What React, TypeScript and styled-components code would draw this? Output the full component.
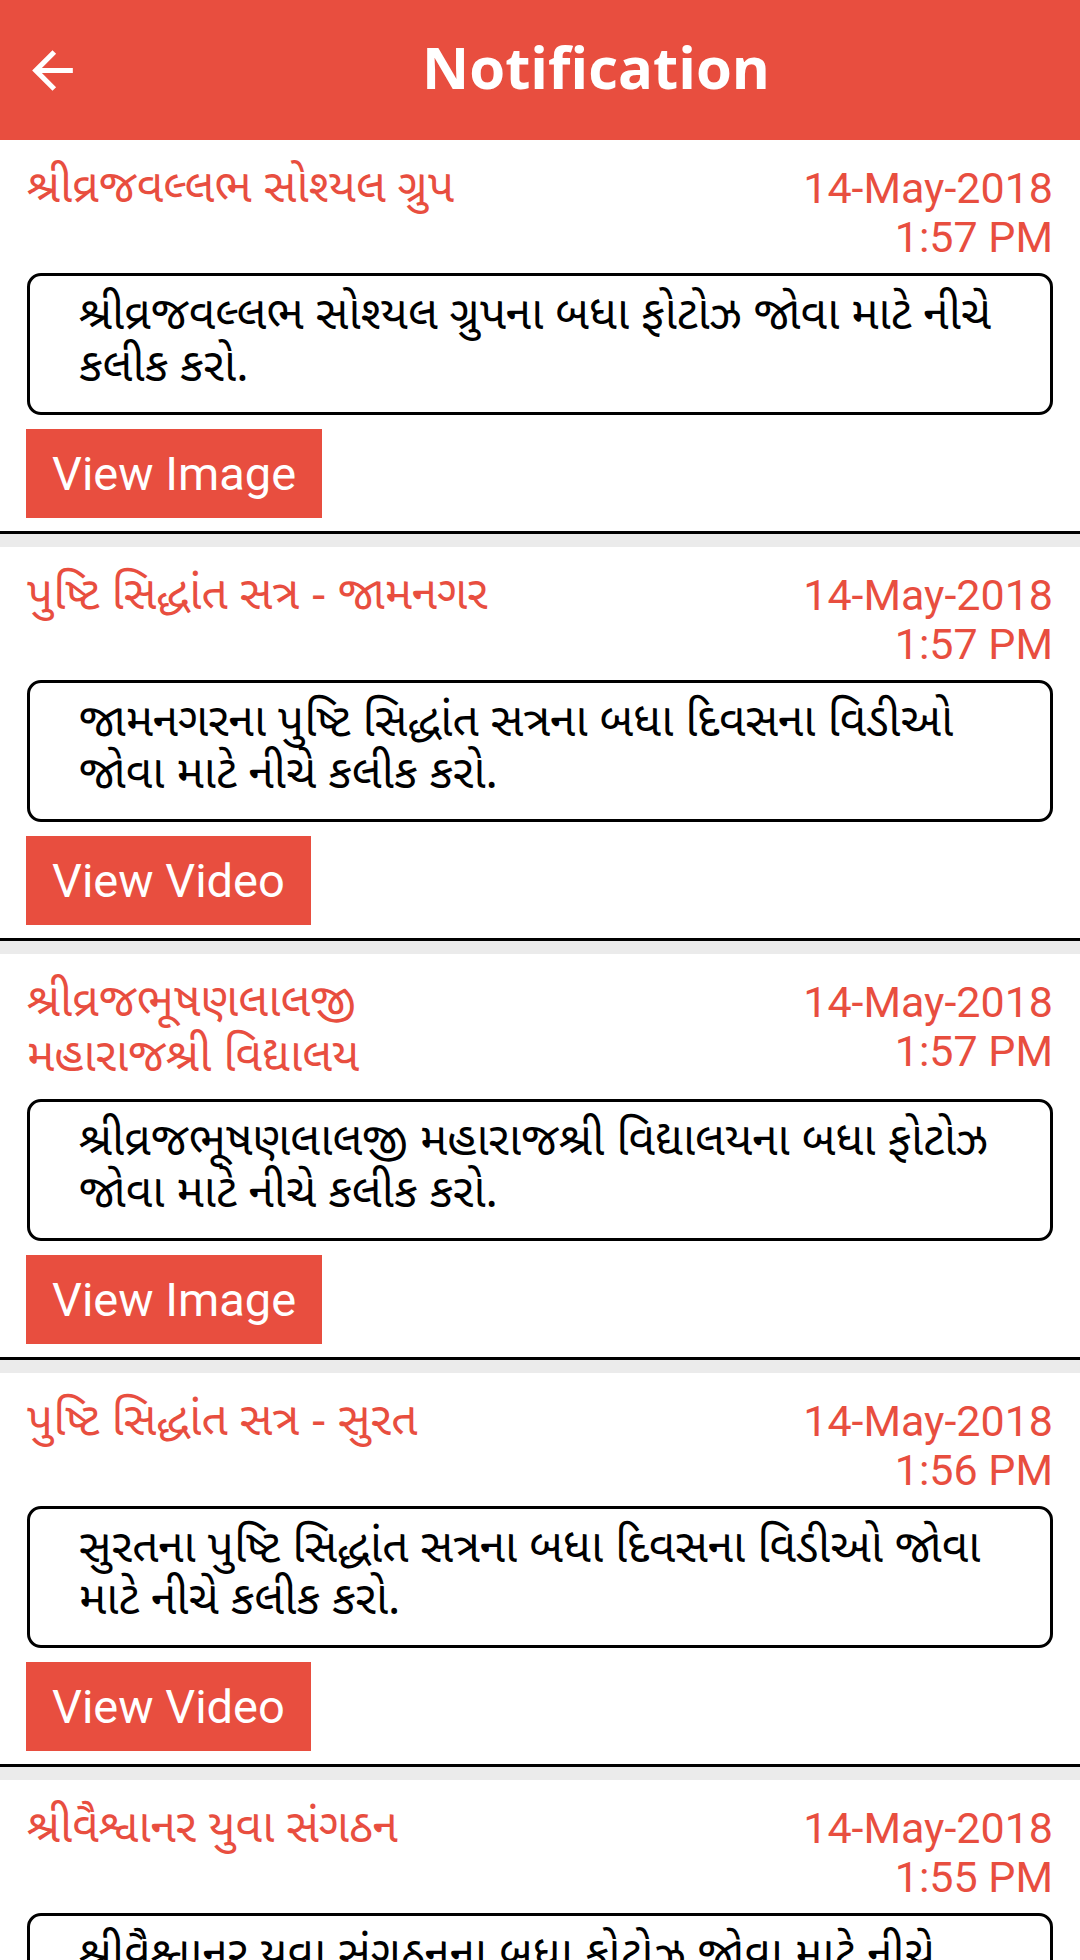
import React from "react";
import styled, { createGlobalStyle } from "styled-components";

const RED = "#E84E3F";
const GUJ = `"Noto Sans Gujarati", "Lohit Gujarati", "Noto Sans", Roboto, sans-serif`;

const Global = createGlobalStyle`
  html, body { margin: 0; padding: 0; background: #ebebeb; }
  body { font-family: Roboto, "Noto Sans", sans-serif; }
  * { box-sizing: border-box; }
`;

const Page = styled.div`
  width: 1080px;
  min-height: 1960px;
  background: #ebebeb;
  display: flex;
  flex-direction: column;
`;

const Header = styled.header`
  height: 140px;
  background: ${RED};
  display: flex;
  align-items: center;
  flex-shrink: 0;
`;

const BackButton = styled.button`
  width: 112px;
  height: 140px;
  border: 0;
  padding: 0 0 0 22px;
  background: transparent;
  display: flex;
  align-items: center;
  justify-content: flex-start;
  color: #fff;
`;

const Title = styled.h1`
  flex: 1;
  margin: 0;
  text-align: center;
  color: #fff;
  font-family: "Open Sans", "Noto Sans", sans-serif;
  font-weight: 700;
  font-size: 58px;
  line-height: 133px;
  padding-bottom: 7px;
`;

const List = styled.div`
  display: flex;
  flex-direction: column;
  gap: 13px;
`;

const Card = styled.article`
  background: #fff;
  border-bottom: 3px solid #000;
  padding: 24px 27px 13px 27px;
  display: flex;
  flex-direction: column;
`;

const TopRow = styled.div`
  display: flex;
  justify-content: space-between;
  align-items: flex-start;
`;

const CardTitle = styled.div`
  width: 48%;
  color: ${RED};
  font-family: ${GUJ};
  font-size: 46px;
  line-height: 55px;
`;

const DateText = styled.div`
  color: ${RED};
  font-family: Roboto, sans-serif;
  font-size: 43px;
  line-height: 49px;
  text-align: right;
  white-space: pre-line;
`;

const MessageBox = styled.div`
  margin-top: 11px;
  border: 3px solid #000;
  border-radius: 14px;
  padding: 16px 36px 16px 49px;
  color: #000;
  font-family: ${GUJ};
  font-size: 46px;
  line-height: 52px;
`;

const ActionButton = styled.button`
  align-self: flex-start;
  margin-top: 14px;
  margin-left: -1px;
  height: 89px;
  padding: 0 26px 0 26px;
  border: 0;
  border-radius: 0;
  background: ${RED};
  color: #fff;
  font-family: Roboto, sans-serif;
  font-size: 47px;
  line-height: 89px;
`;

type Item = {
  title: string;
  date: string;
  time: string;
  body: string;
  action: string;
};

const items: Item[] = [
  {
    title: "શ્રીવ્રજવલ્લભ સોશ્યલ ગ્રુપ",
    date: "14-May-2018",
    time: "1:57 PM",
    body: "શ્રીવ્રજવલ્લભ સોશ્યલ ગ્રુપના બધા ફોટોઝ જોવા માટે નીચે કલીક કરો.",
    action: "View Image",
  },
  {
    title: "પુષ્ટિ સિદ્ધાંત સત્ર - જામનગર",
    date: "14-May-2018",
    time: "1:57 PM",
    body: "જામનગરના પુષ્ટિ સિદ્ધાંત સત્રના બધા દિવસના વિડીઓ જોવા માટે નીચે કલીક કરો.",
    action: "View Video",
  },
  {
    title: "શ્રીવ્રજભૂષણલાલજી મહારાજશ્રી વિદ્યાલય",
    date: "14-May-2018",
    time: "1:57 PM",
    body: "શ્રીવ્રજભૂષણલાલજી મહારાજશ્રી વિદ્યાલયના બધા ફોટોઝ જોવા માટે નીચે કલીક કરો.",
    action: "View Image",
  },
  {
    title: "પુષ્ટિ સિદ્ધાંત સત્ર - સુરત",
    date: "14-May-2018",
    time: "1:56 PM",
    body: "સુરતના પુષ્ટિ સિદ્ધાંત સત્રના બધા દિવસના વિડીઓ જોવા માટે નીચે કલીક કરો.",
    action: "View Video",
  },
  {
    title: "શ્રીવૈશ્વાનર યુવા સંગઠન",
    date: "14-May-2018",
    time: "1:55 PM",
    body: "શ્રીવૈશ્વાનર યુવા સંગઠનના બધા ફોટોઝ જોવા માટે નીચે કલીક કરો.",
    action: "View Image",
  },
];

const BackArrow = () => (
  <svg width="61" height="61" viewBox="0 0 24 24" fill="currentColor">
    <path d="M20 11H7.83l5.59-5.59L12 4l-8 8 8 8 1.41-1.41L7.83 13H20v-2z" />
  </svg>
);

export default function App() {
  return (
    <>
      <Global />
      <Page>
        <Header>
          <BackButton aria-label="Back">
            <BackArrow />
          </BackButton>
          <Title>Notification</Title>
        </Header>
        <List>
          {items.map((it, i) => (
            <Card key={i}>
              <TopRow>
                <CardTitle>{it.title}</CardTitle>
                <DateText>{`${it.date}\n${it.time}`}</DateText>
              </TopRow>
              <MessageBox>{it.body}</MessageBox>
              <ActionButton>{it.action}</ActionButton>
            </Card>
          ))}
        </List>
      </Page>
    </>
  );
}
